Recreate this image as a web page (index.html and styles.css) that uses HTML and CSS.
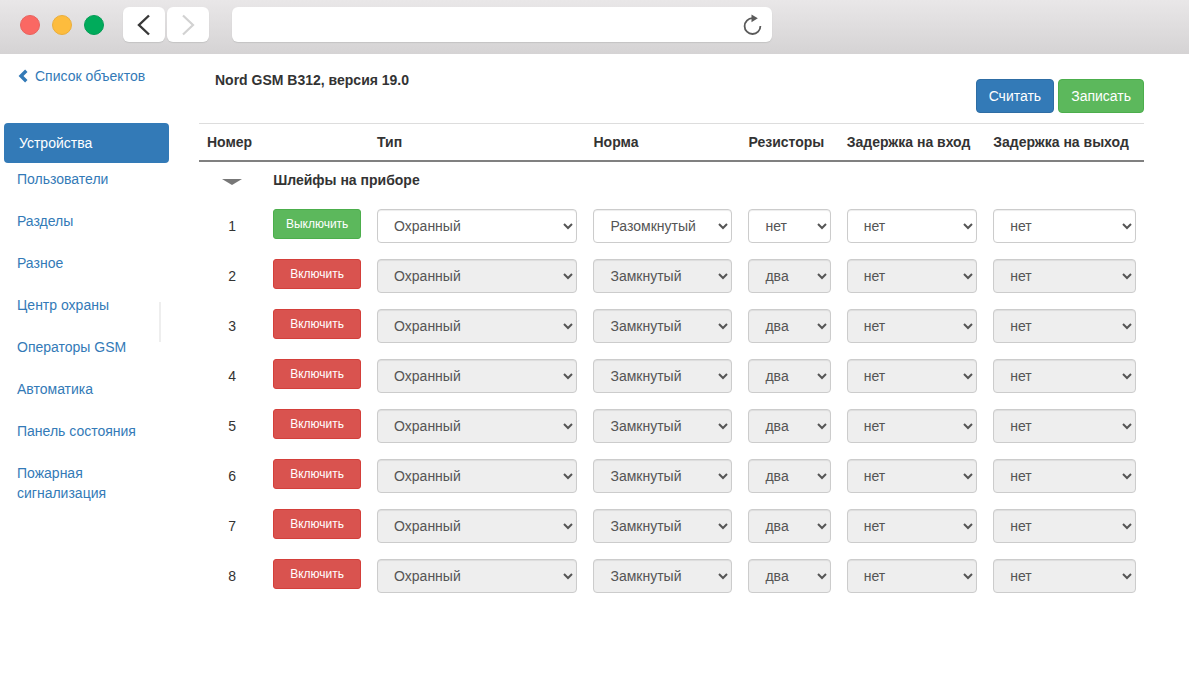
FILE: index.html
```html
<!DOCTYPE html>
<html lang="ru">
<head>
<meta charset="utf-8">
<meta name="viewport" content="width=device-width, initial-scale=1">
<title>Nord GSM B312</title>
<link rel="stylesheet" href="styles.css">
</head>
<body>
<header class="browser-bar">
  <div class="lights">
    <span class="light light-red"></span>
    <span class="light light-yellow"></span>
    <span class="light light-green"></span>
  </div>
  <div class="nav-buttons">
    <button class="nav-button" type="button" aria-label="Назад"><svg width="14" height="22" viewBox="0 0 14 22"><path d="M12 1.500 2 11l10 9.500" fill="none" stroke="#383838" stroke-width="2.400"/></svg></button>
    <button class="nav-button" type="button" aria-label="Вперёд"><svg width="14" height="22" viewBox="0 0 14 22"><path d="M2 1.500 12 11l-10 9.500" fill="none" stroke="#d2d2d2" stroke-width="2.200"/></svg></button>
  </div>
  <div class="address">
    <input class="address-input" type="text" aria-label="Адрес">
    <button class="reload" type="button" aria-label="Обновить"><svg width="20" height="22" viewBox="0 0 20 22"><path d="M10.500 4.200A7.900 7.900 0 1 0 18.400 12" fill="none" stroke="#5a5a5a" stroke-width="1.800"/><path d="M9.500 0.500v7.800L15.800 4.300z" fill="#5a5a5a"/></svg></button>
  </div>
</header>

<div class="layout">
  <aside class="sidebar">
    <a class="back" href="#"><svg width="10" height="14" viewBox="0 0 10 14"><path d="M8.300 1.700 3 7l5.300 5.300" fill="none" stroke="#337ab7" stroke-width="3.400"/></svg>Список объектов</a>
    <nav class="menu">
      <a class="menu-item active" href="#">Устройства</a>
      <a class="menu-item" href="#">Пользователи</a>
      <a class="menu-item" href="#">Разделы</a>
      <a class="menu-item" href="#">Разное</a>
      <a class="menu-item" href="#">Центр охраны</a>
      <a class="menu-item" href="#">Операторы GSM</a>
      <a class="menu-item" href="#">Автоматика</a>
      <a class="menu-item" href="#">Панель состояния</a>
      <a class="menu-item" href="#">Пожарная сигнализация</a>
    </nav>
  </aside>

  <main class="content">
    <div class="heading">
      <h1 class="title">Nord GSM B312, версия 19.0</h1>
      <div class="actions">
        <button class="btn btn-primary" type="button">Считать</button>
        <button class="btn btn-success" type="button">Записать</button>
      </div>
    </div>

    <table class="zones">
      <colgroup>
        <col class="col-number"><col class="col-switch"><col class="col-type"><col class="col-norm"><col class="col-resistors"><col class="col-entry"><col class="col-exit">
      </colgroup>
      <thead>
        <tr><th>Номер</th><th></th><th id="type">Тип</th><th id="norm">Норма</th><th id="res">Резисторы</th><th id="entry">Задержка на вход</th><th id="exit">Задержка на выход</th></tr>
      </thead>
      <tbody>
        <tr class="group">
          <td class="number"><button class="toggle" type="button" aria-label="Свернуть"><svg width="20" height="6" viewBox="0 0 20 6"><path d="M0 0h20l-10 6z" fill="#777"/></svg></button></td>
          <th colspan="6">Шлейфы на приборе</th>
        </tr>
        <tr>
          <td class="number">1</td>
          <td><button class="btn btn-small btn-success" type="button">Выключить</button></td>
          <td><select class="field" aria-labelledby="type"><option>Охранный</option></select></td>
          <td><select class="field" aria-labelledby="norm"><option>Разомкнутый</option><option>Замкнутый</option></select></td>
          <td><select class="field" aria-labelledby="res"><option>нет</option><option>два</option></select></td>
          <td><select class="field" aria-labelledby="entry"><option>нет</option></select></td>
          <td><select class="field" aria-labelledby="exit"><option>нет</option></select></td>
        </tr>
        <tr>
          <td class="number">2</td>
          <td><button class="btn btn-small btn-danger" type="button">Включить</button></td>
          <td><select class="field" aria-labelledby="type" disabled><option>Охранный</option></select></td>
          <td><select class="field" aria-labelledby="norm" disabled><option>Замкнутый</option></select></td>
          <td><select class="field" aria-labelledby="res" disabled><option>два</option></select></td>
          <td><select class="field" aria-labelledby="entry" disabled><option>нет</option></select></td>
          <td><select class="field" aria-labelledby="exit" disabled><option>нет</option></select></td>
        </tr>
        <tr>
          <td class="number">3</td>
          <td><button class="btn btn-small btn-danger" type="button">Включить</button></td>
          <td><select class="field" aria-labelledby="type" disabled><option>Охранный</option></select></td>
          <td><select class="field" aria-labelledby="norm" disabled><option>Замкнутый</option></select></td>
          <td><select class="field" aria-labelledby="res" disabled><option>два</option></select></td>
          <td><select class="field" aria-labelledby="entry" disabled><option>нет</option></select></td>
          <td><select class="field" aria-labelledby="exit" disabled><option>нет</option></select></td>
        </tr>
        <tr>
          <td class="number">4</td>
          <td><button class="btn btn-small btn-danger" type="button">Включить</button></td>
          <td><select class="field" aria-labelledby="type" disabled><option>Охранный</option></select></td>
          <td><select class="field" aria-labelledby="norm" disabled><option>Замкнутый</option></select></td>
          <td><select class="field" aria-labelledby="res" disabled><option>два</option></select></td>
          <td><select class="field" aria-labelledby="entry" disabled><option>нет</option></select></td>
          <td><select class="field" aria-labelledby="exit" disabled><option>нет</option></select></td>
        </tr>
        <tr>
          <td class="number">5</td>
          <td><button class="btn btn-small btn-danger" type="button">Включить</button></td>
          <td><select class="field" aria-labelledby="type" disabled><option>Охранный</option></select></td>
          <td><select class="field" aria-labelledby="norm" disabled><option>Замкнутый</option></select></td>
          <td><select class="field" aria-labelledby="res" disabled><option>два</option></select></td>
          <td><select class="field" aria-labelledby="entry" disabled><option>нет</option></select></td>
          <td><select class="field" aria-labelledby="exit" disabled><option>нет</option></select></td>
        </tr>
        <tr>
          <td class="number">6</td>
          <td><button class="btn btn-small btn-danger" type="button">Включить</button></td>
          <td><select class="field" aria-labelledby="type" disabled><option>Охранный</option></select></td>
          <td><select class="field" aria-labelledby="norm" disabled><option>Замкнутый</option></select></td>
          <td><select class="field" aria-labelledby="res" disabled><option>два</option></select></td>
          <td><select class="field" aria-labelledby="entry" disabled><option>нет</option></select></td>
          <td><select class="field" aria-labelledby="exit" disabled><option>нет</option></select></td>
        </tr>
        <tr>
          <td class="number">7</td>
          <td><button class="btn btn-small btn-danger" type="button">Включить</button></td>
          <td><select class="field" aria-labelledby="type" disabled><option>Охранный</option></select></td>
          <td><select class="field" aria-labelledby="norm" disabled><option>Замкнутый</option></select></td>
          <td><select class="field" aria-labelledby="res" disabled><option>два</option></select></td>
          <td><select class="field" aria-labelledby="entry" disabled><option>нет</option></select></td>
          <td><select class="field" aria-labelledby="exit" disabled><option>нет</option></select></td>
        </tr>
        <tr>
          <td class="number">8</td>
          <td><button class="btn btn-small btn-danger" type="button">Включить</button></td>
          <td><select class="field" aria-labelledby="type" disabled><option>Охранный</option></select></td>
          <td><select class="field" aria-labelledby="norm" disabled><option>Замкнутый</option></select></td>
          <td><select class="field" aria-labelledby="res" disabled><option>два</option></select></td>
          <td><select class="field" aria-labelledby="entry" disabled><option>нет</option></select></td>
          <td><select class="field" aria-labelledby="exit" disabled><option>нет</option></select></td>
        </tr>
      </tbody>
    </table>
  </main>
</div>
</body>
</html>
```
FILE: styles.css
```css
* {
  box-sizing: border-box;
}

body {
  margin: 0;
  background: #fff;
  color: #333;
  font: 14px/20px "Liberation Sans", Arial, sans-serif;
}

button,
input,
select {
  font: inherit;
}

a {
  color: #337ab7;
  text-decoration: none;
}

svg {
  display: block;
}

/* Browser bar */
.browser-bar {
  display: flex;
  align-items: center;
  height: 54px;
  padding: 0 20px 5px;
  background: linear-gradient(#e9e7e8, #d5d3d4);
}

.lights {
  display: flex;
  gap: 12px;
}

.light {
  width: 20px;
  height: 20px;
  border-radius: 50%;
}

.light-red {
  background: #fa6863;
  border: 1px solid #e8625e;
}

.light-yellow {
  background: #fdbc3d;
  border: 1px solid #eaae3b;
}

.light-green {
  background: #00ab5b;
  border: 1px solid #049c55;
}

.nav-buttons {
  display: flex;
  gap: 2px;
  margin: 0 23px 0 19px;
}

.nav-button {
  display: grid;
  place-items: center;
  width: 42px;
  height: 35px;
  padding: 0;
  border: 0;
  border-radius: 6px;
  background: #fff;
  box-shadow: 0 1px 1px #c4c4c4;
}

.address {
  display: flex;
  align-items: center;
  flex: 0 1 540px;
  height: 35px;
  padding-right: 10px;
  border-radius: 6px;
  background: #fff;
  box-shadow: 0 1px 1px #c4c4c4;
}

.address-input {
  flex: 1;
  min-width: 0;
  padding: 0 12px;
  border: 0;
  background: none;
}

.reload {
  padding: 0;
  border: 0;
  background: none;
}

/* Page */
.layout {
  display: flex;
  gap: 30px;
  padding: 0 45px 0 4px;
}

.sidebar {
  position: relative;
  flex: 0 0 165px;
  padding-top: 12px;
}

.sidebar::after {
  content: "";
  position: absolute;
  top: 248px;
  right: 8px;
  width: 2px;
  height: 40px;
  background: #eee;
}

.back {
  display: flex;
  align-items: center;
  gap: 7px;
  padding-left: 14px;
}

.menu {
  display: flex;
  flex-direction: column;
  gap: 22px;
  padding-top: 37px;
}

.menu-item {
  padding: 0 30px 0 13px;
}

.menu-item.active {
  margin-bottom: -16px;
  padding: 10px 15px;
  border-radius: 4px;
  background: #337ab7;
  color: #fff;
}

.content {
  flex: 1;
  min-width: 0;
}

.heading {
  display: flex;
  justify-content: space-between;
  padding: 16px 0 10px 16px;
}

.title {
  margin: 0;
  font-size: 14px;
  line-height: 20px;
}

.actions {
  display: flex;
  gap: 4px;
  padding-top: 9px;
}

.btn {
  padding: 6px 12px;
  border: 1px solid;
  border-radius: 4px;
  color: #fff;
}

.btn-primary {
  background: #337ab7;
  border-color: #2e6da4;
}

.btn-success {
  background: #5cb85c;
  border-color: #4cae4c;
}

.btn-danger {
  background: #d9534f;
  border-color: #d43f3a;
}

.btn-small {
  display: block;
  width: 100%;
  padding: 5px 0;
  border-radius: 3px;
  font-size: 12px;
  line-height: 18px;
}

/* Zones table */
.zones {
  width: 100%;
  table-layout: fixed;
  border-collapse: separate;
  border-spacing: 0;
}

.col-number { width: 7%; }
.col-switch { width: 11%; }
.col-type { width: 22.9%; }
.col-norm { width: 16.4%; }
.col-resistors { width: 10.4%; }
.col-entry { width: 15.5%; }
.col-exit { width: 16.8%; }

.zones th,
.zones td {
  padding: 8px;
  text-align: left;
  vertical-align: top;
}

.zones thead th {
  border-top: 1px solid #ddd;
  border-bottom: 2px solid #808080;
  white-space: nowrap;
}

.zones .number {
  text-align: center;
  vertical-align: middle;
}

.zones .group th {
  padding-bottom: 11px;
}

.toggle {
  display: block;
  margin: 0 auto;
  padding: 0;
  border: 0;
  background: none;
}

.field {
  display: block;
  width: 100%;
  height: 34px;
  padding: 6px 12px;
  border: 1px solid #ccc;
  border-radius: 4px;
  background: #fff;
  box-shadow: inset 0 1px 1px rgba(0, 0, 0, 0.075);
  color: #555;
}

.field:disabled {
  background: #eee;
  opacity: 1;
}
```
